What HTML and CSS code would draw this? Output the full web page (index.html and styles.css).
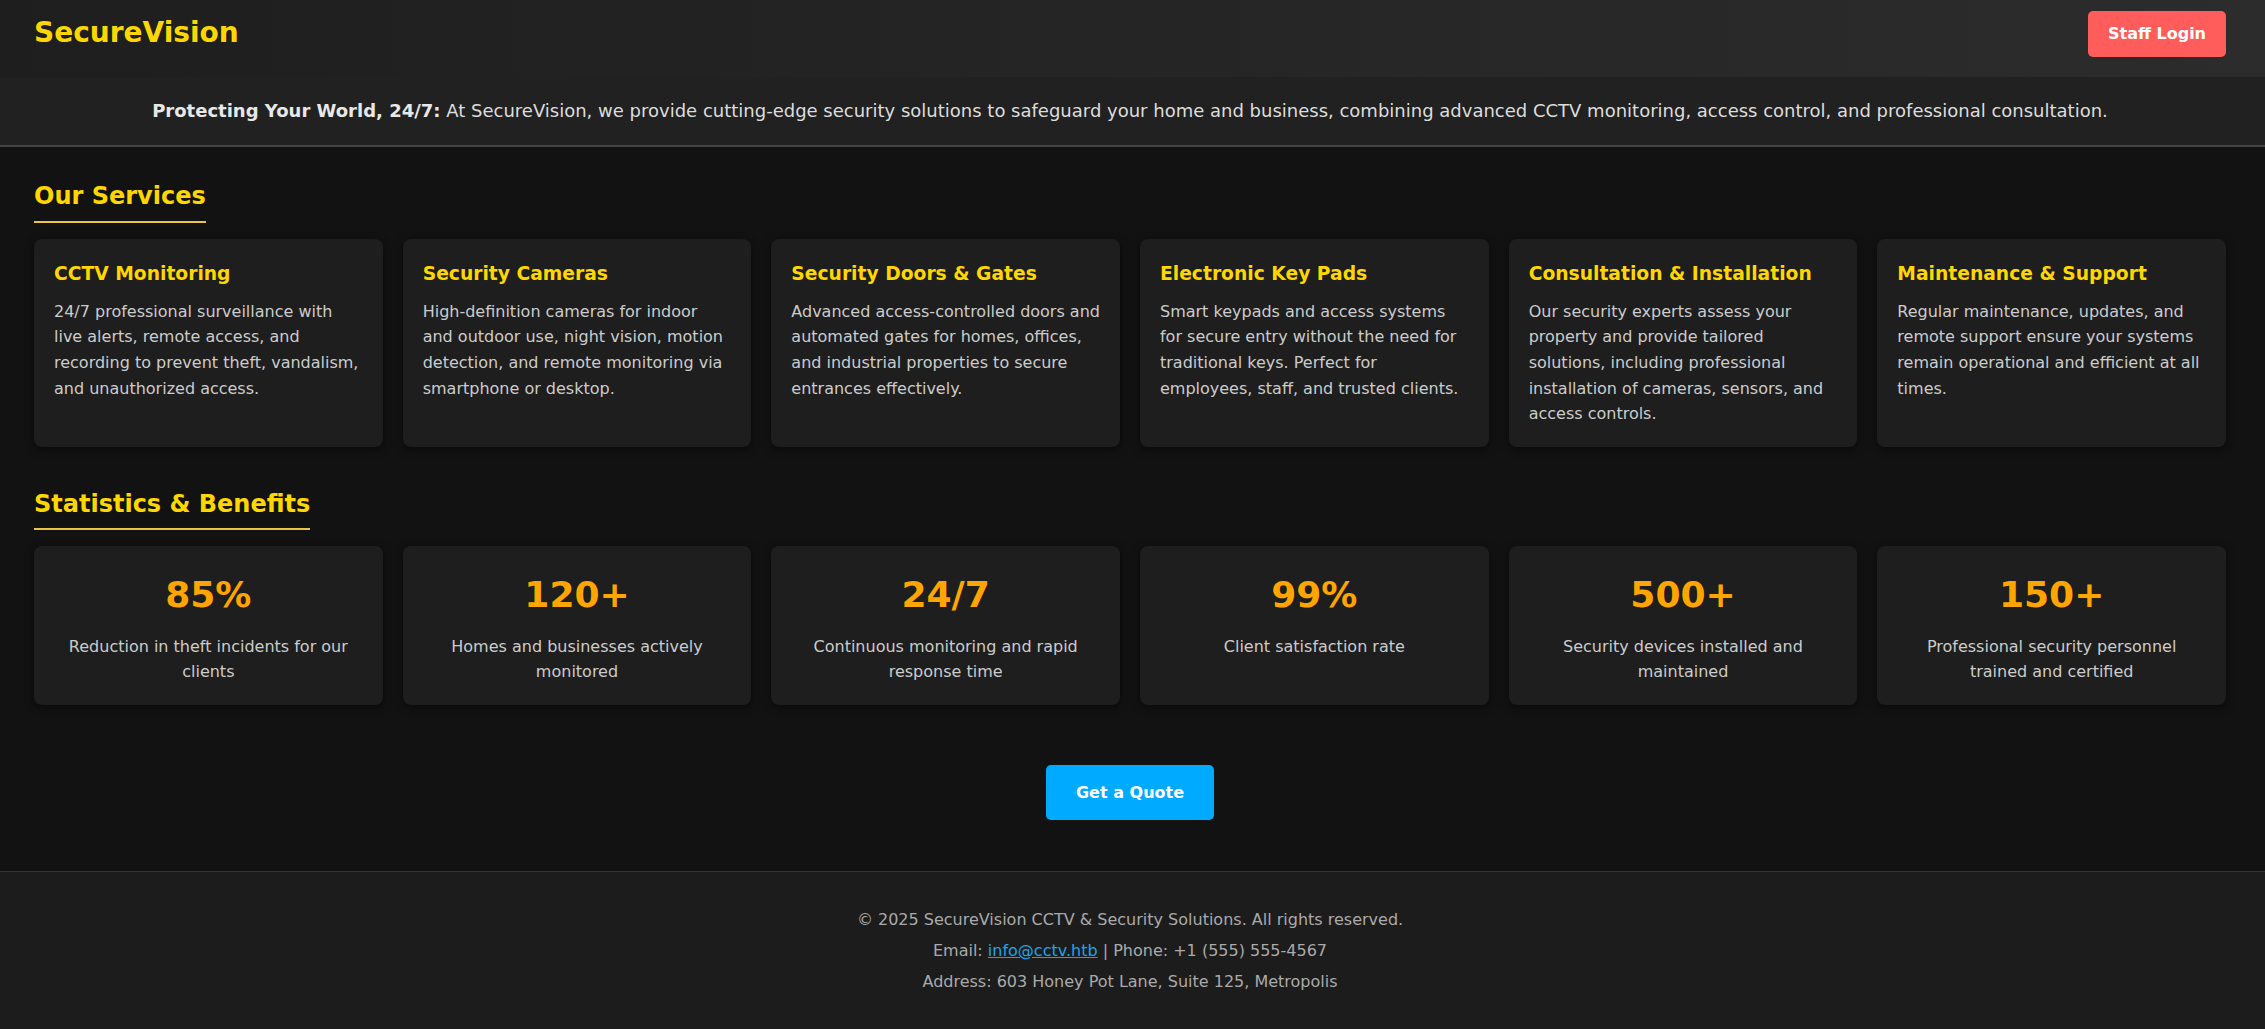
FILE: index.html
```html
<!DOCTYPE html>
<html lang="en">
<head>
    <meta charset="UTF-8">
    <meta name="viewport" content="width=device-width, initial-scale=1.0">
    <title>SecureVision - CCTV &amp; Security Solutions</title>
    <link rel="stylesheet" href="styles.css">
</head>
<body>
    <header class="site-header">
        <div class="logo">SecureVision</div>
        <a href="#" class="btn btn-login">Staff Login</a>
    </header>

    <div class="tagline">
        <strong>Protecting Your World, 24/7:</strong> At SecureVision, we provide cutting-edge security solutions to safeguard your home and business, combining advanced CCTV monitoring, access control, and professional consultation.
    </div>

    <main class="content">
        <section class="section">
            <h2 class="section-title">Our Services</h2>
            <div class="card-grid">
                <div class="card">
                    <h3>CCTV Monitoring</h3>
                    <p>24/7 professional surveillance with live alerts, remote access, and recording to prevent theft, vandalism, and unauthorized access.</p>
                </div>
                <div class="card">
                    <h3>Security Cameras</h3>
                    <p>High-definition cameras for indoor and outdoor use, night vision, motion detection, and remote monitoring via smartphone or desktop.</p>
                </div>
                <div class="card">
                    <h3>Security Doors &amp; Gates</h3>
                    <p>Advanced access-controlled doors and automated gates for homes, offices, and industrial properties to secure entrances effectively.</p>
                </div>
                <div class="card">
                    <h3>Electronic Key Pads</h3>
                    <p>Smart keypads and access systems for secure entry without the need for traditional keys. Perfect for employees, staff, and trusted clients.</p>
                </div>
                <div class="card">
                    <h3>Consultation &amp; Installation</h3>
                    <p>Our security experts assess your property and provide tailored solutions, including professional installation of cameras, sensors, and access controls.</p>
                </div>
                <div class="card">
                    <h3>Maintenance &amp; Support</h3>
                    <p>Regular maintenance, updates, and remote support ensure your systems remain operational and efficient at all times.</p>
                </div>
            </div>
        </section>

        <section class="section">
            <h2 class="section-title">Statistics &amp; Benefits</h2>
            <div class="card-grid">
                <div class="card stat">
                    <div class="stat-number">85%</div>
                    <p>Reduction in theft incidents for our clients</p>
                </div>
                <div class="card stat">
                    <div class="stat-number">120+</div>
                    <p>Homes and businesses actively monitored</p>
                </div>
                <div class="card stat">
                    <div class="stat-number">24/7</div>
                    <p>Continuous monitoring and rapid response time</p>
                </div>
                <div class="card stat">
                    <div class="stat-number">99%</div>
                    <p>Client satisfaction rate</p>
                </div>
                <div class="card stat">
                    <div class="stat-number">500+</div>
                    <p>Security devices installed and maintained</p>
                </div>
                <div class="card stat">
                    <div class="stat-number">150+</div>
                    <p>Professional security personnel trained and certified</p>
                </div>
            </div>
        </section>

        <div class="cta">
            <a href="#" class="btn btn-quote">Get a Quote</a>
        </div>
    </main>

    <footer class="site-footer">
        <p>&copy; 2025 SecureVision CCTV &amp; Security Solutions. All rights reserved.</p>
        <p>Email: <a href="mailto:info@cctv.htb">info@cctv.htb</a> | Phone: +1 (555) 555-4567</p>
        <p>Address: 603 Honey Pot Lane, Suite 125, Metropolis</p>
    </footer>
</body>
</html>
```

FILE: styles.css
```css
body {
    font-family: "DejaVu Sans", Verdana, sans-serif;
    background-color: #121212;
    color: #e0e0e0;
    line-height: 1.6;
    margin: 0;
    padding: 0;
}

.site-header {
    display: flex;
    justify-content: space-between;
    align-items: center;
    padding: 11px 39px 20px 34px;
    background: linear-gradient(90deg, #1e1e1e, #2c2c2c);
}

.logo {
    font-size: 1.75rem;
    font-weight: bold;
    color: #ffd700;
}

.btn {
    display: inline-block;
    font-weight: bold;
    color: #fff;
    text-decoration: none;
    border-radius: 5px;
}

.btn-login {
    background: #ff5c5c;
    padding: 10px 20px;
}

.tagline {
    background: #212121;
    padding: 20px 39px 20px 34px;
    border-bottom: 2px solid #444;
    text-align: center;
    font-size: 1.125rem;
    color: #ddd;
}

.tagline strong {
    color: #e8e8e8;
}

.content {
    padding: 30px 39px 51px 34px;
}

.section {
    margin-bottom: 38px;
}

.section-title {
    display: inline-block;
    font-size: 1.5rem;
    color: #ffd700;
    margin: 0 0 16px;
    padding-bottom: 5px;
    border-bottom: 2px solid #e8c547;
}

.card-grid {
    display: grid;
    grid-template-columns: repeat(6, 1fr);
    gap: 20px;
}

.card {
    background: #1e1e1e;
    border-radius: 8px;
    padding: 20px;
    box-shadow: 0 2px 8px rgba(0, 0, 0, 0.5);
}

.card h3 {
    font-size: 1.17rem;
    color: #ffd700;
    margin: 0 0 10px;
}

.card p {
    margin: 0;
    color: #ccc;
}

.stat {
    text-align: center;
}

.stat-number {
    font-size: 2.25rem;
    font-weight: bold;
    color: #ffa500;
    margin-bottom: 10px;
}

.cta {
    text-align: center;
    margin-top: 60px;
}

.btn-quote {
    background: #00aaff;
    padding: 15px 30px;
}

.site-footer {
    background: #1c1c1c;
    border-top: 1px solid #333;
    padding: 30px 39px 30px 34px;
    text-align: center;
    color: #aaa;
}

.site-footer p {
    margin: 5px 0;
}

.site-footer a {
    color: #1ea4e6;
}
```
